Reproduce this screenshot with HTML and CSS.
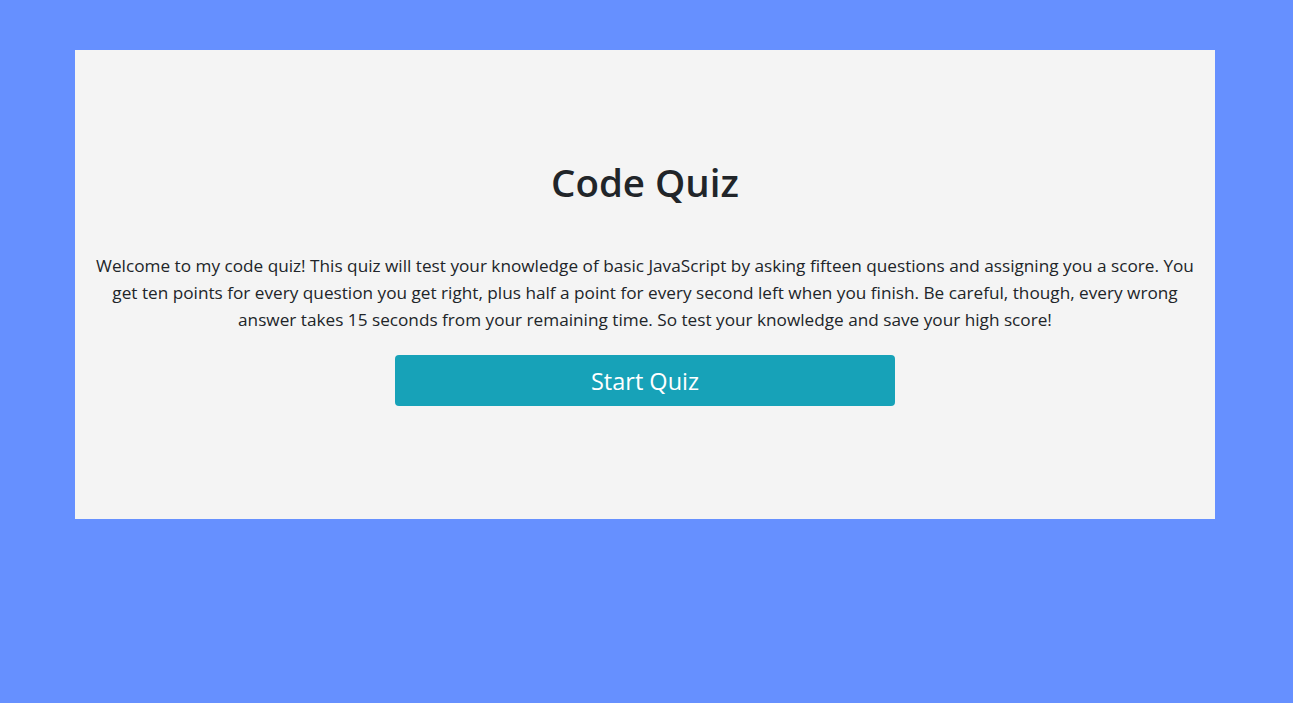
FILE: index.html
```html
<!DOCTYPE html>
<html lang="en">
<head>
<meta charset="utf-8">
<title>Code Quiz</title>
<link rel="stylesheet" href="styles.css">
</head>
<body>
<main class="card">
  <h1 class="title">Code Quiz</h1>
  <p class="intro">Welcome to my code quiz! This quiz will test your knowledge of basic JavaScript by asking fifteen questions and assigning you a score. You get ten points for every question you get right, plus half a point for every second left when you finish. Be careful, though, every wrong answer takes 15 seconds from your remaining time. So test your knowledge and save your high score!</p>
  <button class="start" type="button">Start Quiz</button>
</main>
</body>
</html>
```
FILE: styles.css
```css
html, body {
  margin: 0;
  padding: 0;
}
body {
  background: #6690ff;
  font-family: "Open Sans", "Noto Sans", sans-serif;
  color: #212529;
  height: 703px;
}
.card {
  width: 1140px;
  box-sizing: border-box;
  margin: 50px 0 0 75px;
  background: #f4f4f4;
  padding: 107px 18px 113px;
  display: flex;
  flex-direction: column;
  align-items: center;
}
.title {
  margin: 0;
  font-size: 38.5px;
  line-height: 50px;
  font-weight: 600;
}
.intro {
  margin: 45px 0 0;
  font-size: 17.2px;
  line-height: 27px;
  text-align: center;
}
.start {
  margin-top: 22px;
  width: 500px;
  height: 51px;
  border: none;
  border-radius: 4px;
  background: #17a2b8;
  color: #fff;
  font-family: inherit;
  font-size: 23.5px;
  padding: 0;
}
```
